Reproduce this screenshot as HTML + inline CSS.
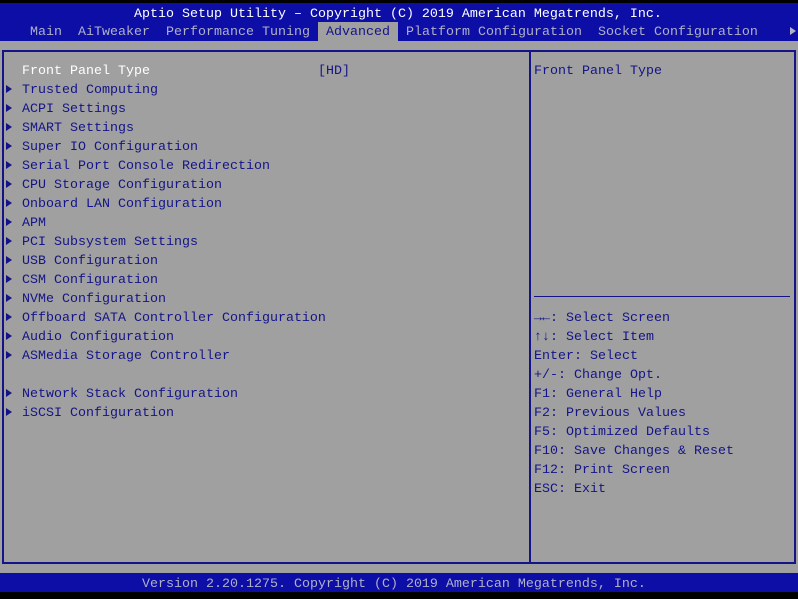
<!DOCTYPE html>
<html><head><meta charset="utf-8"><style>
*{margin:0;padding:0;box-sizing:border-box}
body{width:798px;height:599px;background:#000;position:relative;overflow:hidden;font-family:"Liberation Mono","DejaVu Sans Mono",monospace;font-size:13.33px}
.blue{position:absolute;left:0;width:798px;background:#0c0ea6}
.gray{position:absolute;left:0;top:41px;width:798px;height:532px;background:#a0a0a0}
.t{position:absolute;line-height:19px;height:19px;white-space:pre}
.w{color:#fff}
.lb{color:#b0b0c8}
.db{color:#141488}
.tri{position:absolute;left:6px;width:0;height:0;border-top:4.5px solid transparent;border-bottom:4.5px solid transparent;border-left:6px solid #141488}
</style></head><body>
<div class="blue" style="top:3px;height:38px"></div>
<div class="gray"></div>
<div class="blue" style="top:573px;height:19px"></div>
<div class="t w" style="left:134px;top:5px">Aptio Setup Utility – Copyright (C) 2019 American Megatrends, Inc.</div>
<div style="position:absolute;left:318px;top:22px;width:80px;height:19px;background:#a0a0a0"></div>
<div class="t lb" style="left:30px;top:23px">Main  AiTweaker  Performance Tuning  </div>
<div class="t db" style="left:326px;top:23px">Advanced</div>
<div class="t lb" style="left:406px;top:23px">Platform Configuration  Socket Configuration</div>
<div style="position:absolute;left:790px;top:27px;width:0;height:0;border-top:4.5px solid transparent;border-bottom:4.5px solid transparent;border-left:6px solid #b0b0c8"></div>
<div style="position:absolute;left:2px;top:50px;width:794px;height:514px;border:2px solid #141488"></div>
<div style="position:absolute;left:529px;top:50px;width:2px;height:514px;background:#141488"></div>
<div style="position:absolute;left:534px;top:296px;width:256px;height:1px;background:#141488"></div>
<div class="t w" style="left:22px;top:62px">Front Panel Type</div>
<div class="t db" style="left:318px;top:62px">[HD]</div>
<div class="t db" style="left:534px;top:62px">Front Panel Type</div>
<div class="t db" style="left:534px;top:309px">→←: Select Screen
↑↓: Select Item
Enter: Select
+/-: Change Opt.
F1: General Help
F2: Previous Values
F5: Optimized Defaults
F10: Save Changes &amp; Reset
F12: Print Screen
ESC: Exit</div>
<div class="t db" style="left:22px;top:81px">Trusted Computing
ACPI Settings
SMART Settings
Super IO Configuration
Serial Port Console Redirection
CPU Storage Configuration
Onboard LAN Configuration
APM
PCI Subsystem Settings
USB Configuration
CSM Configuration
NVMe Configuration
Offboard SATA Controller Configuration
Audio Configuration
ASMedia Storage Controller

Network Stack Configuration
iSCSI Configuration</div>
<div class="tri" style="top:85px"></div><div class="tri" style="top:104px"></div><div class="tri" style="top:123px"></div><div class="tri" style="top:142px"></div><div class="tri" style="top:161px"></div><div class="tri" style="top:180px"></div><div class="tri" style="top:199px"></div><div class="tri" style="top:218px"></div><div class="tri" style="top:237px"></div><div class="tri" style="top:256px"></div><div class="tri" style="top:275px"></div><div class="tri" style="top:294px"></div><div class="tri" style="top:313px"></div><div class="tri" style="top:332px"></div><div class="tri" style="top:351px"></div><div class="tri" style="top:389px"></div><div class="tri" style="top:408px"></div>
<div class="t lb" style="left:142px;top:575px">Version 2.20.1275. Copyright (C) 2019 American Megatrends, Inc.</div>
</body></html>
